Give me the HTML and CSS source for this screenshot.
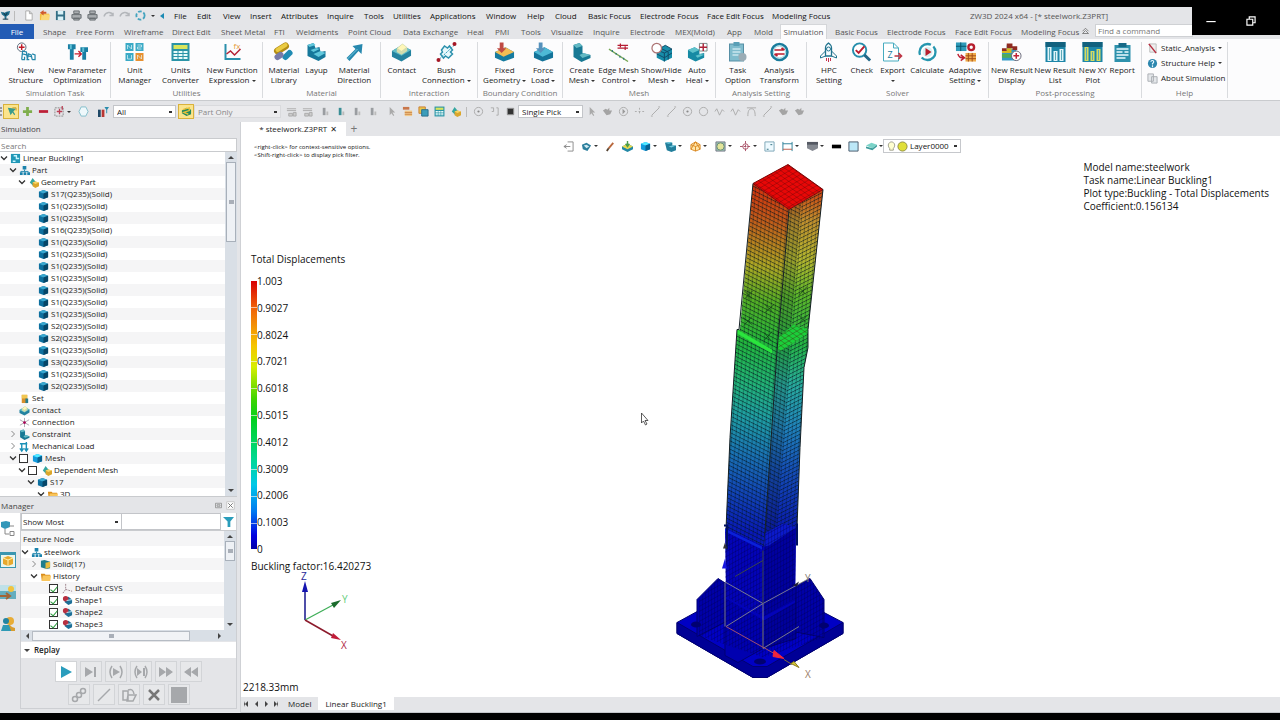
FILE: index.html
```html
<!DOCTYPE html>
<html lang="en">
<head>
<meta charset="utf-8">
<title>ZW3D 2024 x64 - [* steelwork.Z3PRT]</title>
<link rel="stylesheet" href="styles.css">
</head>
<body>
<svg class="sprite" aria-hidden="true">
<symbol id="cube" viewBox="0 0 12 12"><path d="M1 3 6 1l5 2v6l-5 2-5-2z" fill="#0d6f9e"/><path d="M1 3 6 1l5 2-5 2z" fill="#3aa7cf"/><path d="M6 5l5-2v6l-5 2z" fill="#064668"/></symbol>
<symbol id="tree" viewBox="0 0 12 12"><path d="M4 1h4v4H4zM1 8h3v3H1zM5 8h3v3H5zM9 8h3v3H9z" fill="#1b83ac"/><path d="M6 5v2M2 8V7h8v1" stroke="#1b83ac" fill="none"/></symbol>
<symbol id="geo" viewBox="0 0 12 12"><path d="M2 6 5 1l4 5-3 4z" fill="#35a6a0"/><path d="M5 6l3-1 4 1v4l-4 2-3-2z" fill="#dba62c"/><path d="M5 6l3-1 4 1-4 1.500z" fill="#f7d566"/></symbol>
<symbol id="folder" viewBox="0 0 12 12"><path d="M1 3h4l1 1h5v7H2z" fill="#d98c1a"/><path d="M3 5h9l-1 6H2z" fill="#f9c55b"/></symbol>
<symbol id="down" viewBox="0 0 8 8"><path d="M1 2.500 4 5.500 7 2.500" fill="none" stroke="#333" stroke-width="1.300"/></symbol>
<symbol id="right" viewBox="0 0 8 8"><path d="M2.500 1 5.500 4 2.500 7" fill="none" stroke="#888"/></symbol>
<symbol id="shape" viewBox="0 0 12 12"><path d="M3 4l4-2 4 3v4l-4 2-4-3z" fill="#1d6f96"/><circle cx="4" cy="4" r="3" fill="#b83040"/><path d="M5 6l6-1" stroke="#c9eefa"/></symbol>
<symbol id="struct" viewBox="0 0 22 20"><circle cx="7" cy="5" r="4.500" fill="#fff" stroke="#567"/><path d="M7 2v6M4 5h6" stroke="#c11a28" stroke-width="1.500"/><path d="M7 18l1-9 4 1 1 8M13 18l1-6 3 1 1 5M8 12l4 1M14 14l3 1M7 18h3v-3M12 18h3M18 18h3v-5l-3-1" fill="none" stroke="#2387ab" stroke-width="1.300"/></symbol>
<symbol id="param" viewBox="0 0 22 20"><path d="M1 2h8v5H7v11H3V7H1zM14 5h8v5h-2v8h-4v-8h-2z" fill="#197fa4"/><path d="M3 2h2v5H3zM16 5h2v5h-2z" fill="#60c0d5"/><path d="M8 12h6M12 9l3 3-3 3" fill="none" stroke="#c51c2d" stroke-width="1.400"/></symbol>
<symbol id="unitm" viewBox="0 0 20 20"><path d="M1 1h8v8H1zM11 1h8v8h-8zM1 11h8v8H1z" fill="#3baac6"/><path d="M11 11h8v8h-8z" fill="#e79131"/><path d="M3 7V3l4 4V3M13 3h4v2h-4v2h4M3 13v4h4v-4M13 17v-4l4 4v-4" fill="none" stroke="#dff4f8" stroke-opacity=".7"/></symbol>
<symbol id="unitc" viewBox="0 0 20 20"><rect x="1" y="1" width="18" height="18" fill="#2b94a7"/><path d="M3 3h14v4H3z" fill="#d9e55c"/><path d="M3 9h4v2H3zM8 9h4v2H8zM13 9h4v2h-4zM3 12h4v2H3zM8 12h4v2H8zM13 12h4v2h-4zM3 15h4v2H3zM8 15h4v2H8zM13 15h4v2h-4z" fill="#e9fbfa"/></symbol>
<symbol id="func" viewBox="0 0 20 20"><path d="M3 2v15h15" fill="none" stroke="#2a8fac" stroke-width="2"/><path d="M4 12l4-3 4 4 6-6" fill="none" stroke="#b52236" stroke-width="1.500"/><text x="11" y="7" font-size="8" fill="#e49b39">fx</text></symbol>
<symbol id="matlib" viewBox="0 0 20 20"><path d="M4 9l8-5" stroke="#b48d16" stroke-width="7" stroke-linecap="round"/><path d="M4 8l8-5" stroke="#eacb42" stroke-width="4" stroke-linecap="round"/><path d="M12 15l4-4" stroke="#1f8bb3" stroke-width="6" stroke-linecap="round"/><path d="M4 15l3-2" stroke="#777ba9" stroke-width="6" stroke-linecap="round"/></symbol>
<symbol id="layup" viewBox="0 0 20 20"><path d="M1 3l6-2 2 5 4-1 1 5 5-1v6l-7 4-11-5z" fill="#16789b"/><path d="M1 3l6-2 2 2-6 2zM4 8l6-2 3 1-6 3zM7 12l7-3 5 2-7 4z" fill="#60c7dc"/></symbol>
<symbol id="matdir" viewBox="0 0 20 20"><path d="M2 16L11 7 8 4l10-2-1 10-3-3-9 10z" fill="#2688ae"/><path d="M3 17l10-10" stroke="#70c5dc"/></symbol>
<symbol id="contact" viewBox="0 0 22 20"><path d="M1 9l10-6 10 5v6l-10 6-10-5z" fill="#23829f"/><path d="M1 9l10-6 10 5-10 6z" fill="#62bdc6"/><path d="M6 6l6-5 5 4v4l-6 4-5-3z" fill="#d2dcad"/><path d="M7 6l5-4 4 3-5 4z" fill="#fff7b8"/></symbol>
<symbol id="bush" viewBox="0 0 20 20"><path d="M5 8l3-4 3 2 2-2 3 4-2 2 2 2-4 4-3-2-2 2-3-4 2-2z" fill="#e7f8fb" stroke="#2d91ad" stroke-width="1.500"/><path d="M3 17L18 3" stroke="#2c9bba" stroke-dasharray="2 1"/><circle cx="2" cy="18" r="2" fill="#a51725"/><circle cx="18" cy="2" r="2" fill="#a51725"/></symbol>
<symbol id="fixed" viewBox="0 0 22 20"><path d="M1 10l11-5 9 5v6l-11 4-9-4z" fill="#157b9f"/><path d="M1 10l11-5 9 5-11 5z" fill="#f2bd53"/><path d="M6 0h4v6h3l-5 5-5-5h3z" fill="#bf4a43"/></symbol>
<symbol id="force" viewBox="0 0 22 20"><path d="M1 10l11-5 9 5v6l-11 4-9-4z" fill="#137399"/><path d="M1 10l11-5 9 5-11 5z" fill="#4db9d5"/><path d="M6 0h4v6h3l-5 5-5-5h3z" fill="#5591bc"/></symbol>
<symbol id="mesh" viewBox="0 0 20 20"><path d="M2 3l6-2 3 3v7l8 2v3l-9 4-8-5z" fill="#187994"/><path d="M2 3l6-2 3 3-6 2zM8 13l4-2 7 2-8 3z" fill="#63b9c4"/></symbol>
<symbol id="edge" viewBox="0 0 22 20"><path d="M1 7l20 13" stroke="#75a754" stroke-width="1.300"/><path d="M4 9h1M8 12h1M12 15h1M16 17h1" stroke="#17647a" stroke-width="2"/><path d="M10 3h11M10 6h11M13 1v4M18 4v4" stroke="#b51c33" stroke-width="1.300"/></symbol>
<symbol id="show" viewBox="0 0 22 20"><path d="M6 8l9-5 7 4v9l-8 4-8-4z" fill="#178da9"/><path d="M6 8l9-5 7 4-8 4zM14 11v9M10 6l8 4v8M6 12l8 4 8-5" fill="none" stroke="#114b67"/><circle cx="6" cy="6" r="5" fill="#fff" stroke="#ad7474" stroke-width="1.300"/></symbol>
<symbol id="heal" viewBox="0 0 22 20"><path d="M1 8l7-3 5 3v4l5-1v5l-9 4-8-4z" fill="#168aa4"/><path d="M1 8l7-3 5 3-7 3zM9 14l5-2 4 1-7 3z" fill="#5ec2cb"/><path d="M13 1h8v8h-8z" fill="#fff" stroke="#788"/><path d="M17 1v8M13 5h8" stroke="#ad2339" stroke-width="1.500"/></symbol>
<symbol id="task" viewBox="0 0 20 20"><rect x="2" y="2" width="14" height="17" fill="#80bccd" stroke="#568fa5"/><path d="M6 0h6v4H6z" fill="#5a9fb6"/><path d="M5 7h8M5 10h8M5 13h6" stroke="#eefbff"/><circle cx="15" cy="15" r="4" fill="#9aacb5"/></symbol>
<symbol id="transform" viewBox="0 0 20 20"><circle cx="10" cy="10" r="8" fill="#fff" stroke="#197c9c" stroke-width="2.500"/><circle cx="10" cy="10" r="6" fill="none" stroke="#94d5e2"/><path d="M5 8h9M12 6l3 2M15 12H6M8 14l-3-2" stroke="#bd1d2e" stroke-width="1.700"/></symbol>
<symbol id="hpc" viewBox="0 0 20 20"><path d="M7 14V6c0-3 3-5 3-5s3 2 3 5v8z" fill="#f5fcff" stroke="#21738e" stroke-width="1.300"/><circle cx="10" cy="7" r="2" fill="none" stroke="#21738e"/><path d="M7 9l-5 5v2l5-2M13 9l5 5v2l-5-2" fill="none" stroke="#21738e"/><path d="M8 16v3M10 16v4M12 16v3" stroke="#c5314c"/></symbol>
<symbol id="check" viewBox="0 0 22 20"><circle cx="9" cy="8" r="7" fill="#fff" stroke="#258eac" stroke-width="2"/><path d="M14 13l6 6" stroke="#236787" stroke-width="3"/><path d="M5 8l3 3 6-7" fill="none" stroke="#ba1c2f" stroke-width="2"/></symbol>
<symbol id="export" viewBox="0 0 20 20"><path d="M1 1h10l5 5v13H1zM11 1v5h5" fill="#fff" stroke="#47acc0"/><text x="5" y="16" font-size="9" fill="#197da1">Z</text><path d="M12 14h7M16 11l3 3-3 3" fill="none" stroke="#bd3444" stroke-width="1.600"/></symbol>
<symbol id="calc" viewBox="0 0 20 20"><circle cx="10" cy="10" r="8" fill="#fff" stroke="#2596af" stroke-width="2.300" stroke-dasharray="19 3"/><circle cx="10" cy="10" r="5" fill="#d9f0f2"/><path d="M8 6l6 4-6 4z" fill="#b8202d"/></symbol>
<symbol id="adapt" viewBox="0 0 22 20"><path d="M1 0h11v9H1z" fill="#2e9ab9"/><path d="M6 0v9M1 4h11" stroke="#07546b"/><circle cx="17" cy="5" r="3" fill="none" stroke="#b61e2d" stroke-width="2.500"/><path d="M11 11h11v9H11z" fill="#efaa48"/><path d="M14 11v9M18 11v9M11 14h11M11 17h11" stroke="#a34c18"/><path d="M3 12c1 4 3 4 6 4M6 13l4 3-4 3" fill="none" stroke="#bc1f31" stroke-width="1.500"/></symbol>
<symbol id="result" viewBox="0 0 22 20"><path d="M1 8h5V3h5v4h5v12H1z" fill="#3299c5"/><path d="M1 6h5v3H1zM6 1h6v5H6zM12 4h5v4h-5z" fill="#8f2a20"/><path d="M1 9h5V6h5v5H1z" fill="#d6b91f"/><path d="M1 12h10v4H1z" fill="#4fab58"/><circle cx="16" cy="14" r="5" fill="#fff" stroke="#667"/><path d="M16 11v6M13 14h6" stroke="#c02335" stroke-width="1.600"/></symbol>
<symbol id="bars" viewBox="0 0 20 20"><path d="M0 0h20v20H0z" fill="#1d86a8"/><path d="M0 0h20v5H0z" fill="#12617e"/><path d="M2 5h4v14H2zM8 9h4v10H8zM14 7h4v12h-4z" fill="currentColor"/><path d="M4 6v12M10 10v8M16 8v10" stroke="#5aa9b8"/></symbol>
<symbol id="report" viewBox="0 0 18 20"><path d="M1 3h16v17H1z" fill="#2d91ac"/><path d="M5 1h8v4H5z" fill="#176987"/><path d="M3 7h12M3 10h6M11 10h4M3 13h12M3 16h9" stroke="#eafaff" stroke-width="1.500"/></symbol>
<symbol id="page" viewBox="0 0 12 12"><path d="M3 1h4l3 3v7H3zM7 1v3h3" fill="#fff" stroke="#aaa"/></symbol>
<symbol id="save" viewBox="0 0 12 12"><path d="M1 1h10v10H1z" fill="#346f86"/><path d="M3 1h6v4H3zM3 7h6v4H3z" fill="#d9f2f8"/></symbol>
<symbol id="print" viewBox="0 0 12 12"><path d="M3 1h6v3H3zM1 5h10v4H1zM3 9h6v2H3z" fill="#a9adb0" stroke="#656a6d"/></symbol>
<symbol id="undo" viewBox="0 0 12 12"><path d="M1 6c2-5 8-4 10 1M1 3v3h4" fill="none" stroke="#b4b7bb" stroke-width="1.500"/></symbol>
<symbol id="hex" viewBox="0 0 12 12"><path d="M3.500 1h5L11 6 8.500 11h-5L1 6z" fill="#eef8fb" stroke="#7fbccb"/></symbol>
<symbol id="pair" viewBox="0 0 12 12"><path d="M1 3h10M1 5h10M3 8h4v3H3zM8 7h3v4H8z" fill="#ccc" stroke="#aaa"/></symbol>
<symbol id="tiny" viewBox="0 0 12 12"><path d="M3 2h3v8H3z" fill="currentColor"/><path d="M7 6h2v4H7z" fill="#bbb"/></symbol>
<symbol id="stack" viewBox="0 0 12 12"><path d="M1 1h7v3H1z" fill="#c9764a"/><path d="M3 5h8v6H3z" fill="#f2c98a"/><path d="M3 7h8M3 9h8" stroke="#c98347"/></symbol>
<symbol id="sheets" viewBox="0 0 12 12"><path d="M1 1h7v7H1z" fill="#e7c54a" stroke="#cb7c34"/><path d="M4 4h7v7H4z" fill="#3b9dba" stroke="#256b8b"/></symbol>
<symbol id="line" viewBox="0 0 12 12"><path d="M2 10l8-8M1 11h2M9 1h2" stroke="#aaa"/></symbol>
<symbol id="circle" viewBox="0 0 12 12"><circle cx="6" cy="6" r="4.500" fill="none" stroke="#aaa"/></symbol>
<symbol id="dotc" viewBox="0 0 12 12"><circle cx="6" cy="6" r="4.500" fill="none" stroke="#aaa"/><circle cx="6" cy="6" r="1.200" fill="#888"/></symbol>
<symbol id="wave" viewBox="0 0 12 12"><path d="M1 6l2-3 3 7 3-6 2 2" fill="none" stroke="#aaa"/></symbol>
<symbol id="arch" viewBox="0 0 12 12"><path d="M2 11c0-5 1-8 4-8s4 3 4 8M1 2h10" fill="none" stroke="#aaa"/></symbol>
<symbol id="pick" viewBox="0 0 12 12"><path d="M4 1v9l2-2 2 3 1-1-2-3h3z" fill="#aaa"/></symbol>
<symbol id="blob" viewBox="0 0 12 12"><path d="M1 5l3-2 2 1 2-2v3h3L9 9 5 10z" fill="#a4a4a4"/></symbol>
</svg>
<div class="strip"></div>

<header class="menubar">
  <div class="quick">
    <svg class="ic" viewBox="0 0 12 12"><path d="M1 2l4 1 2-1 4-1-1 4-3 2v3H5V7L2 5z" fill="#1f6d8c"/><path d="M4 3l2 3 2-3M3 10h6" fill="none" stroke="#12303f"/></svg><span class="bar"></span>
    <button title="New"><svg class="ic"><use href="#page"/></svg></button>
    <button title="Open"><svg class="ic" viewBox="0 0 12 12"><path d="M1 4h10v7H1z" fill="#f3bd3f"/><path d="M3 5h9l-1 6H2z" fill="#fbd876"/><path d="M5 0L1 3l4 3V4h3V2H5z" fill="#d05a2b"/></svg></button>
    <button title="Save"><svg class="ic"><use href="#save"/></svg></button>
    <button title="Print"><svg class="ic"><use href="#print"/></svg></button>
    <button title="Print 3D"><svg class="ic"><use href="#print"/></svg></button>
    <button title="Undo"><svg class="ic flip"><use href="#undo"/></svg></button>
    <button title="Redo"><svg class="ic flip"><use href="#undo"/></svg></button>
    <button title="Regenerate"><svg class="ic" viewBox="0 0 12 12"><circle cx="6" cy="6" r="4.500" fill="none" stroke="#45a4bf" stroke-width="2" stroke-dasharray="4 2"/></svg></button>
    <i class="caret"></i><i class="back"></i>
  </div>
  <nav class="menus"><a href="#">File</a><a href="#">Edit</a><a href="#">View</a><a href="#">Insert</a><a href="#">Attributes</a><a href="#">Inquire</a><a href="#">Tools</a><a href="#">Utilities</a><a href="#">Applications</a><a href="#">Window</a><a href="#">Help</a><a href="#">Cloud</a><a href="#">Basic Focus</a><a href="#">Electrode Focus</a><a href="#">Face Edit Focus</a><a href="#">Modeling Focus</a><span>ZW3D 2024 x64 - [* steelwork.Z3PRT]</span></nav>
</header>
<div class="winctl">
  <button title="Minimize"><svg viewBox="0 0 12 12"><path d="M2 6.500h8" stroke="#fff"/></svg></button>
  <button title="Restore"><svg viewBox="0 0 12 12"><path d="M2.500 4.500h5v5h-5zM4.500 4.500v-2h5v5h-2" fill="none" stroke="#fff"/></svg></button>
</div>

<nav class="tabs"><a class="file" href="#">File</a><a href="#">Shape</a><a href="#">Free Form</a><a href="#">Wireframe</a><a href="#">Direct Edit</a><a href="#">Sheet Metal</a><a href="#">FTI</a><a href="#">Weldments</a><a href="#">Point Cloud</a><a href="#">Data Exchange</a><a href="#">Heal</a><a href="#">PMI</a><a href="#">Tools</a><a href="#">Visualize</a><a href="#">Inquire</a><a href="#">Electrode</a><a href="#">MEX(Mold)</a><a href="#">App</a><a href="#">Mold</a><a class="on" href="#">Simulation</a><a href="#">Basic Focus</a><a href="#">Electrode Focus</a><a href="#">Face Edit Focus</a><a href="#">Modeling Focus</a><svg class="roll" viewBox="0 0 12 12"><path d="M2 7l4-4 4 4M2 10l4-4 4 4z" fill="none" stroke="#666"/></svg><input type="text" placeholder="Find a command" aria-label="Find a command"></nav>

<section class="ribbon">
  <div class="group g1"><div class="tools">
    <button><svg><use href="#struct"/></svg><span>New<br>Structure</span></button>
    <button><svg><use href="#param"/></svg><span>New Parameter<br>Optimization</span></button></div><h2>Simulation Task</h2></div>
  <div class="group g2"><div class="tools">
    <button><svg><use href="#unitm"/></svg><span>Unit<br>Manager</span></button>
    <button><svg><use href="#unitc"/></svg><span>Units<br>Converter</span></button>
    <button><svg><use href="#func"/></svg><span>New Function<br>Expression <i class="caret"></i></span></button></div><h2>Utilities</h2></div>
  <div class="group g3"><div class="tools">
    <button><svg><use href="#matlib"/></svg><span>Material<br>Library</span></button>
    <button><svg><use href="#layup"/></svg><span>Layup</span></button>
    <button><svg><use href="#matdir"/></svg><span>Material<br>Direction</span></button></div><h2>Material</h2></div>
  <div class="group g4"><div class="tools">
    <button><svg><use href="#contact"/></svg><span>Contact</span></button>
    <button><svg><use href="#bush"/></svg><span>Bush<br>Connection <i class="caret"></i></span></button></div><h2>Interaction</h2></div>
  <div class="group g5"><div class="tools">
    <button><svg><use href="#fixed"/></svg><span>Fixed<br>Geometry <i class="caret"></i></span></button>
    <button><svg><use href="#force"/></svg><span>Force<br>Load <i class="caret"></i></span></button></div><h2>Boundary Condition</h2></div>
  <div class="group g6"><div class="tools">
    <button><svg><use href="#mesh"/></svg><span>Create<br>Mesh <i class="caret"></i></span></button>
    <button><svg><use href="#edge"/></svg><span>Edge Mesh<br>Control <i class="caret"></i></span></button>
    <button><svg><use href="#show"/></svg><span>Show/Hide<br>Mesh <i class="caret"></i></span></button>
    <button><svg><use href="#heal"/></svg><span>Auto<br>Heal <i class="caret"></i></span></button></div><h2>Mesh</h2></div>
  <div class="group g7"><div class="tools">
    <button><svg><use href="#task"/></svg><span>Task<br>Option</span></button>
    <button><svg><use href="#transform"/></svg><span>Analysis<br>Transform</span></button></div><h2>Analysis Setting</h2></div>
  <div class="group g8"><div class="tools">
    <button><svg><use href="#hpc"/></svg><span>HPC<br>Setting</span></button>
    <button><svg><use href="#check"/></svg><span>Check</span></button>
    <button><svg><use href="#export"/></svg><span>Export<br><i class="caret"></i></span></button>
    <button><svg><use href="#calc"/></svg><span>Calculate</span></button>
    <button><svg><use href="#adapt"/></svg><span>Adaptive<br>Setting <i class="caret"></i></span></button></div><h2>Solver</h2></div>
  <div class="group g9"><div class="tools">
    <button><svg><use href="#result"/></svg><span>New Result<br>Display</span></button>
    <button><svg class="cool"><use href="#bars"/></svg><span>New Result<br>List</span></button>
    <button><svg class="warm"><use href="#bars"/></svg><span>New XY<br>Plot</span></button>
    <button><svg><use href="#report"/></svg><span>Report</span></button></div><h2>Post-processing</h2></div>
  <div class="group help"><div class="helplist">
    <button><svg class="ic" viewBox="0 0 12 12"><path d="M3 1h7v9H3z" fill="#eee" stroke="#bbb"/><path d="M2 1l8 10" stroke="#b52b3d" stroke-width="1.600"/></svg>Static_Analysis <i class="caret"></i></button>
    <button><svg class="ic" viewBox="0 0 12 12"><circle cx="6" cy="6" r="5" fill="#2d87ae"/><path d="M4 4c2-3 5 0 2 2v1M6 8v2" fill="none" stroke="#e7f8ff" stroke-width="1.300"/></svg>Structure Help <i class="caret"></i></button>
    <button><svg class="ic" viewBox="0 0 12 12"><path d="M1 1h6v8H1zM5 4h6v7H5z" fill="#e4e7ea" stroke="#a8adb1"/></svg>About Simulation</button></div><h2>Help</h2></div>
</section>

<div class="toolbar">
  <span class="grip"></span>
  <button class="lit" title="Pick"><svg class="ic" viewBox="0 0 12 12"><path d="M2 2l3 8 2-3 2 3 1-1-2-3 3-3z" fill="#3b9b8c"/><path d="M7 2h4v3" fill="none" stroke="#c79a2a"/></svg></button>
  <button title="Add"><svg class="ic" viewBox="0 0 12 12"><path d="M6 1v10M1 6h10" stroke="#7fae4c" stroke-width="3"/></svg></button>
  <button title="Remove"><svg class="ic" viewBox="0 0 12 12"><path d="M1 6h10" stroke="#bd2038" stroke-width="3"/></svg></button>
  <button title="Box"><svg class="ic" viewBox="0 0 12 12"><path d="M1 2h9v9H1z" fill="none" stroke="#888" stroke-dasharray="2 1"/><path d="M6 3v6M3 6h6M9 0v4" stroke="#bb4055" stroke-width="1.400"/></svg></button>
  <i class="caret"></i>
  <button class="spaced" title="Polygon"><svg class="ic"><use href="#hex"/></svg></button>
  <button title="Filter"><svg class="ic" viewBox="0 0 12 12"><path d="M0 4h3v8H0z" fill="#1f4866"/><path d="M4 4h3v8H4z" fill="#b93632"/><path d="M7 1h5L10 4v4H9V4z" fill="#2b8cac"/></svg></button>
  <select class="s1" aria-label="Filter"><option>All</option></select>
  <button class="lit" title="Scope"><svg class="ic" viewBox="0 0 12 12"><path d="M1 5l5-3 5 2v5l-5 2-5-3z" fill="#23885f"/><path d="M2 4l7-2v3l-6 2 5 2" fill="none" stroke="#e8c139" stroke-width="1.500"/></svg></button>
  <select class="s2" disabled aria-label="Scope"><option>Part Only</option></select>
  <button title="Align"><svg class="ic"><use href="#pair"/></svg></button>
  <button title="Group"><svg class="ic"><use href="#pair"/></svg></button>
  <button class="gap" title="Tag 1"><svg class="ic dim"><use href="#tiny"/></svg></button>
  <button title="Tag 2"><svg class="ic teal"><use href="#tiny"/></svg></button>
  <button title="Tag 3"><svg class="ic dim"><use href="#tiny"/></svg></button>
  <button title="Tag 4"><svg class="ic dim"><use href="#tiny"/></svg></button>
  <button class="gap" title="Cursor"><svg class="ic"><use href="#pick"/></svg></button>
  <button title="List"><svg class="ic"><use href="#stack"/></svg></button>
  <button title="Copy"><svg class="ic"><use href="#sheets"/></svg></button>
  <button title="Calculate"><svg class="ic"><use href="#unitc"/></svg></button>
  <button title="Browse"><svg class="ic"><use href="#geo"/></svg></button>
  <span class="bar"></span>
  <button title="Target"><svg class="ic"><use href="#dotc"/></svg></button>
  <button title="Path"><svg class="ic" viewBox="0 0 12 12"><path d="M2 2h3v4H3M8 2h2v8H8" fill="none" stroke="#aaa"/></svg></button>
  <button title="Stop"><svg class="ic" viewBox="0 0 12 12"><path d="M2.500 2.500h7v7h-7z" fill="#333" stroke="#999"/></svg></button>
  <select class="s3" aria-label="Pick mode"><option>Single Pick</option></select>
  <button title="Pick"><svg class="ic"><use href="#pick"/></svg></button>
  <button title="Edges"><svg class="ic"><use href="#blob"/></svg></button>
  <button title="Centre"><svg class="ic" viewBox="0 0 12 12"><circle cx="6" cy="6" r="4.500" fill="none" stroke="#aaa"/><path d="M5 3l3 3-3 3z" fill="#999"/></svg></button>
  <button title="Points"><svg class="ic" viewBox="0 0 12 12"><path d="M1 6h10M6 2v8" stroke="#aaa" stroke-dasharray="2 2"/></svg></button>
  <button title="Line"><svg class="ic"><use href="#line"/></svg></button>
  <button title="Segment"><svg class="ic"><use href="#line"/></svg></button>
  <button title="Circle"><svg class="ic"><use href="#dotc"/></svg></button>
  <button title="Arc"><svg class="ic"><use href="#circle"/></svg></button>
  <button title="Spline"><svg class="ic"><use href="#wave"/></svg></button>
  <button title="Curve"><svg class="ic"><use href="#wave"/></svg></button>
  <button title="Tangent"><svg class="ic"><use href="#arch"/></svg></button>
  <button title="Ray"><svg class="ic"><use href="#line"/></svg></button>
  <button title="Face"><svg class="ic"><use href="#blob"/></svg></button>
  <button title="Body"><svg class="ic"><use href="#blob"/></svg></button>
</div>

<main>
<aside>
  <h2 class="ptitle">Simulation</h2>
  <input class="search" type="text" placeholder="Search" aria-label="Search">
  <div class="pane simpane">
    <ul class="rows">
      <li><svg class="tw"><use href="#down"/></svg><svg class="ic" viewBox="0 0 12 12"><path d="M1 1h10v10H1z" fill="#2097b6"/><path d="M4 3h3v3h3M3 9h3" fill="none" stroke="#c8f5ff" stroke-width="1.500"/></svg>Linear Buckling1</li>
      <li class="l1"><svg class="tw"><use href="#down"/></svg><svg class="ic"><use href="#tree"/></svg>Part</li>
      <li class="l2"><svg class="tw"><use href="#down"/></svg><svg class="ic"><use href="#geo"/></svg>Geometry Part</li>
      <li class="leaf"><svg class="ic"><use href="#cube"/></svg>S17(Q235)(Solid)</li>
      <li class="leaf"><svg class="ic"><use href="#cube"/></svg>S1(Q235)(Solid)</li>
      <li class="leaf"><svg class="ic"><use href="#cube"/></svg>S1(Q235)(Solid)</li>
      <li class="leaf"><svg class="ic"><use href="#cube"/></svg>S16(Q235)(Solid)</li>
      <li class="leaf"><svg class="ic"><use href="#cube"/></svg>S1(Q235)(Solid)</li>
      <li class="leaf"><svg class="ic"><use href="#cube"/></svg>S1(Q235)(Solid)</li>
      <li class="leaf"><svg class="ic"><use href="#cube"/></svg>S1(Q235)(Solid)</li>
      <li class="leaf"><svg class="ic"><use href="#cube"/></svg>S1(Q235)(Solid)</li>
      <li class="leaf"><svg class="ic"><use href="#cube"/></svg>S1(Q235)(Solid)</li>
      <li class="leaf"><svg class="ic"><use href="#cube"/></svg>S1(Q235)(Solid)</li>
      <li class="leaf"><svg class="ic"><use href="#cube"/></svg>S1(Q235)(Solid)</li>
      <li class="leaf"><svg class="ic"><use href="#cube"/></svg>S2(Q235)(Solid)</li>
      <li class="leaf"><svg class="ic"><use href="#cube"/></svg>S2(Q235)(Solid)</li>
      <li class="leaf"><svg class="ic"><use href="#cube"/></svg>S1(Q235)(Solid)</li>
      <li class="leaf"><svg class="ic"><use href="#cube"/></svg>S3(Q235)(Solid)</li>
      <li class="leaf"><svg class="ic"><use href="#cube"/></svg>S1(Q235)(Solid)</li>
      <li class="leaf"><svg class="ic"><use href="#cube"/></svg>S2(Q235)(Solid)</li>
      <li class="item"><svg class="ic" viewBox="0 0 12 12"><path d="M3 2h6v9H3z" fill="#d8902c"/><path d="M3 2h6v4H3z" fill="#f0c751"/><path d="M7 6h3v5H7z" fill="#287c8b"/></svg>Set</li>
      <li class="item"><svg class="ic"><use href="#contact"/></svg>Contact</li>
      <li class="item"><svg class="ic" viewBox="0 0 12 12"><path d="M6 1v10M1 3l10 6M1 9l10-6" stroke="#a9a4ad"/><circle cx="6" cy="6" r="1.500" fill="#a05"/></svg>Connection</li>
      <li class="l1"><svg class="tw"><use href="#right"/></svg><svg class="ic"><use href="#mesh"/></svg>Constraint</li>
      <li class="l1"><svg class="tw"><use href="#right"/></svg><svg class="ic" viewBox="0 0 12 12"><path d="M3 3v7M1 8l2 3 2-3M8 1v9M6 8l2 3 2-3M1 3h8" fill="none" stroke="#1b91b7" stroke-width="1.500"/></svg>Mechanical Load</li>
      <li class="l1"><svg class="tw"><use href="#down"/></svg><label><input type="checkbox"><svg class="ic bright"><use href="#cube"/></svg>Mesh</label></li>
      <li class="l2"><svg class="tw"><use href="#down"/></svg><label><input type="checkbox"><svg class="ic"><use href="#geo"/></svg>Dependent Mesh</label></li>
      <li class="l3"><svg class="tw"><use href="#down"/></svg><svg class="ic"><use href="#cube"/></svg>S17</li>
      <li class="l4"><svg class="tw"><use href="#down"/></svg><svg class="ic"><use href="#folder"/></svg>3D</li>
    </ul>
    <div class="vscroll"><i class="up"></i><b class="long"></b><i class="dn"></i></div>
  </div>
  <h2 class="ptitle mgr">Manager <svg class="ic" viewBox="0 0 12 12"><path d="M2 3h8v6H2zM4 5h4v2H4z" fill="none" stroke="#888"/></svg><svg class="ic" viewBox="0 0 12 12"><path d="M1 1h10v10H1z" fill="#fff" stroke="#bbb"/><path d="M3 3l6 6M9 3l-6 6" stroke="#777" stroke-width="1.300"/></svg></h2>
  <div class="manager">
    <div class="side">
      <button class="cur" title="History"><svg viewBox="0 0 16 16"><path d="M1 2l5-1 4 1v5l-5 2-4-2z" fill="#3297b9"/><path d="M5 9v5h4M9 6h5" fill="none" stroke="#888"/><path d="M10 11.500h4v4h-4z" fill="#fff" stroke="#888"/></svg></button>
      <button title="View"><svg viewBox="0 0 16 16"><path d="M0 0h16v16H0z" fill="#3996b0"/><path d="M1 3h14v12H1z" fill="#e9f5ee"/><path d="M3 6l5-2 5 2v6l-5 2-5-2z" fill="#e7a92e"/><path d="M3 6l5 2 5-2M8 8v6" fill="none" stroke="#fff0a8"/></svg></button>
      <button title="Visual"><svg viewBox="0 0 16 16"><path d="M0 1h16v14H0z" fill="#64aebf"/><path d="M0 1h16v6H0z" fill="#bfe1e9"/><circle cx="11" cy="5" r="3" fill="#f1c33e"/><path d="M0 12h9M6 9l4 3-4 3" fill="none" stroke="#a26537" stroke-width="2"/></svg></button>
      <button title="Roles"><svg viewBox="0 0 16 16"><circle cx="10" cy="5" r="4" fill="#e8ac36"/><path d="M9 8l3 3 3 1v3H8z" fill="#d99c2e"/><circle cx="6" cy="5" r="3" fill="#2384a2"/><path d="M1 15l2-6h6l2 6z" fill="#2f9ab5"/></svg></button>
    </div>
    <div class="hist">
      <div class="filter"><select aria-label="Show"><option>Show Most</option></select><input type="text" aria-label="Filter features"><button title="Filter"><svg class="ic" viewBox="0 0 12 12"><path d="M0 1h12L8 6v6H5V6z" fill="#2a9dbb"/></svg></button></div>
      <div class="pane histpane">
        <ul class="rows">
          <li class="head">Feature Node</li>
          <li><svg class="tw"><use href="#down"/></svg><svg class="ic"><use href="#tree"/></svg>steelwork</li>
          <li class="l1"><svg class="tw"><use href="#right"/></svg><svg class="ic" viewBox="0 0 12 12"><path d="M1 2l4-1 6 2v7l-4 1-6-2z" fill="#1d7d8c"/><path d="M6 4l5-1v6l-5 2z" fill="#e6bb3e"/></svg>Solid(17)</li>
          <li class="l1"><svg class="tw"><use href="#down"/></svg><svg class="ic"><use href="#folder"/></svg>History</li>
          <li class="chk"><label><input type="checkbox" checked><svg class="ic" viewBox="0 0 12 12"><path d="M4 1v6l7 2M4 7l-3 4" fill="none" stroke="#9a7f88" stroke-dasharray="2 1"/></svg>Default CSYS</label></li>
          <li class="chk"><label><input type="checkbox" checked><svg class="ic"><use href="#shape"/></svg>Shape1</label></li>
          <li class="chk"><label><input type="checkbox" checked><svg class="ic"><use href="#shape"/></svg>Shape2</label></li>
          <li class="chk"><label><input type="checkbox" checked><svg class="ic"><use href="#shape"/></svg>Shape3</label></li>
        </ul>
        <div class="vscroll"><i class="up"></i><b class="short"></b><i class="dn"></i></div>
      </div>
      <div class="hscroll"><i class="lf"></i><b></b><i class="rt"></i></div>
      <h3><i class="dn"></i>Replay</h3>
      <div class="replay">
        <div><button class="play" title="Play"><svg viewBox="0 0 16 16"><path d="M3 2l11 6-11 6z" fill="#2a9dbd"/></svg></button>
        <button title="Step"><svg viewBox="0 0 16 16"><path d="M2 3l8 5-8 5zM11 3h2v10h-2z"/></svg></button>
        <button title="To point"><svg viewBox="0 0 16 16"><path d="M5 4l7 4-7 4z"/><path d="M4 2q-4 6 0 12M12 2q4 6 0 12" class="o"/></svg></button>
        <button title="Skip"><svg viewBox="0 0 16 16"><path d="M4 4l5 4-5 4zM10 4h2v8h-2z"/><path d="M4 2q-4 6 0 12M12 2q4 6 0 12" class="o"/></svg></button>
        <button title="Forward"><svg viewBox="0 0 16 16"><path d="M1 3l7 5-7 5zM8 3l7 5-7 5z"/></svg></button>
        <button title="Rewind"><svg viewBox="0 0 16 16"><path d="M15 3L8 8l7 5zM8 3L1 8l7 5z"/></svg></button></div>
        <div><button title="Link"><svg viewBox="0 0 16 16"><circle cx="4" cy="12" r="2.500" class="o"/><circle cx="8" cy="8" r="2.500" class="o"/><circle cx="12" cy="4" r="2.500" class="o"/></svg></button>
        <button title="Edit"><svg viewBox="0 0 16 16"><path d="M2 14L14 2" class="o"/></svg></button>
        <button title="Redefine"><svg viewBox="0 0 16 16"><path d="M2 4h5v9H2zM7 8h8l-3 6H6z" class="o"/><path d="M7 3q5-2 6 4" class="o"/></svg></button>
        <button title="Delete"><svg viewBox="0 0 16 16"><path d="M3 3l10 10M13 3L3 13" stroke="#777" stroke-width="2.500"/></svg></button>
        <button title="Stop"><svg viewBox="0 0 16 16"><path d="M0 0h16v16H0z"/></svg></button></div>
      </div>
    </div>
  </div>
</aside>

<section class="doc">
  <div class="doctabs"><a href="#">* steelwork.Z3PRT <b>✕</b></a><button title="New tab">+</button></div>
  <div class="view">
    <div class="info">
      <p class="hint">&lt;right-click&gt; for context-sensitive options.<br>&lt;Shift-right-click&gt; to display pick filter.</p>
      <p class="ltitle">Total Displacements</p>
      <div class="legend"><div class="ramp"></div><ol><li>1.003</li><li>0.9027</li><li>0.8024</li><li>0.7021</li><li>0.6018</li><li>0.5015</li><li>0.4012</li><li>0.3009</li><li>0.2006</li><li>0.1003</li><li>0</li></ol></div>
      <p class="factor">Buckling factor:16.420273</p>
      <svg class="triad" viewBox="292 571 72 84"><path d="M305 621V590" stroke="#14148c" stroke-width="1.500"/><path d="M302 593l3-11 3 11z" fill="#1414b0"/><path d="M305 621l28-15" stroke="#3fae58" stroke-width="1.300"/><path d="M331 604l10-3-7 8z" fill="#1b6b2c"/><path d="M305 621l28 16" stroke="#8c1a2c" stroke-width="1.500"/><path d="M333 634l8 7-10-2z" fill="#c01c38"/><text x="301" y="581" fill="#2a2a9a">Z</text><text x="342" y="604" fill="#5fce7c">Y</text><text x="341" y="650" fill="#b02742">X</text></svg>
      <p class="scale">2218.33mm</p>
    </div>
    <div class="stage">
      <div class="viewbar">
        <button title="Exit"><svg class="ic" viewBox="0 0 12 12"><path d="M5 1h6v10H5M1 6h7M4 4L1 6l3 2" fill="none" stroke="#888"/></svg></button>
        <button class="w" title="View"><svg class="ic" viewBox="0 0 12 12"><path d="M1 4l5-2 5 3-4 6-5-2z" fill="#2c7f9d"/><path d="M3 5l3-1 3 2-3 2z" fill="#cfeaf2"/></svg><i class="caret"></i></button>
        <button title="Paint"><svg class="ic" viewBox="0 0 12 12"><path d="M4 8l5-6" stroke="#b9683d" stroke-width="2"/><path d="M2 11l2-3" stroke="#543" stroke-width="2"/></svg></button>
        <button title="Isolate"><svg class="ic" viewBox="0 0 12 12"><path d="M0 6l6-3 6 3v3l-6 3-6-3z" fill="#2388a6"/><path d="M0 6l6-3 6 3-6 3z" fill="#e8d94e"/><path d="M6 0v5M4 3l2 3 2-3" fill="none" stroke="#4c9b4b" stroke-width="1.500"/></svg></button>
        <button class="w" title="Shade"><svg class="ic bright"><use href="#cube"/></svg><i class="caret"></i></button>
        <button class="w" title="Section"><svg class="ic" viewBox="0 0 12 12"><path d="M0 2l5-1 3 1v3h4v5l-5 2-5-2z" fill="#237f9c"/><path d="M0 2l5-1 3 1-4 1zM4 6l4-1h4l-5 2z" fill="#6ec9dd"/></svg><i class="caret"></i></button>
        <button class="w" title="Wireframe"><svg class="ic" viewBox="0 0 12 12"><path d="M1 4l5-3 5 3v5l-5 2-5-2zM1 4l5 2 5-2M6 6v5M1 9l5-8 5 8" fill="#ffe6a8" stroke="#d9861d"/></svg><i class="caret"></i></button>
        <button class="w" title="Zoom"><svg class="ic" viewBox="0 0 12 12"><path d="M1 1h10v10H1z" fill="#9bc6b4" stroke="#778"/><circle cx="6" cy="6" r="4" fill="#e2e59a" stroke="#687"/></svg><i class="caret"></i></button>
        <button class="w" title="Centre"><svg class="ic" viewBox="0 0 12 12"><path d="M6 0v12M0 6h12" stroke="#a54b63" stroke-dasharray="3 1"/><circle cx="6" cy="6" r="3" fill="none" stroke="#a54b63"/></svg><i class="caret"></i></button>
        <button title="Grid"><svg class="ic" viewBox="0 0 12 12"><path d="M1 1h10v10H1z" fill="#eefaff" stroke="#7aa3b5"/><path d="M3 9h2M7 4h2" stroke="#267"/></svg></button>
        <button class="w" title="Dimension"><svg class="ic" viewBox="0 0 12 12"><path d="M1 1v10M11 1v10M1 3h10" stroke="#267d96" fill="none"/><path d="M1 9h10" stroke="#b54"/></svg><i class="caret"></i></button>
        <button class="w" title="Background"><svg class="ic" viewBox="0 0 12 12"><path d="M0 1h12v7l-6 3-6-3z" fill="#858991"/><path d="M0 1h12v3H0z" fill="#555963"/></svg><i class="caret"></i></button>
        <button title="Line colour"><svg class="ic" viewBox="0 0 12 12"><path d="M1 4h10v4H1z"/></svg></button>
        <button title="Fill colour"><svg class="ic" viewBox="0 0 12 12"><path d="M1 1h10v10H1z" fill="#bce8f8" stroke="#456"/></svg></button>
        <button class="w" title="Layers"><svg class="ic" viewBox="0 0 12 12"><path d="M0 5l6-3 6 2-5 4z" fill="#7bd3c8"/><path d="M0 6l7 2 5-4v2l-5 4-7-2z" fill="#3d9c9b"/></svg><i class="caret"></i></button>
        <div class="layer"><svg class="ic" viewBox="0 0 12 12"><path d="M4 8C1 5 3 1 6 1s5 4 2 7v2H4z" fill="#ffffd0" stroke="#998"/></svg><svg class="ic" viewBox="0 0 12 12"><circle cx="6" cy="6" r="5" fill="#e0df39" stroke="#8c8b43"/></svg><select aria-label="Layer"><option>Layer0000</option></select></div>
      </div>
      <svg class="model" viewBox="560 156 401 538" role="img" aria-label="Buckling result on steel column">
        <defs>
          <linearGradient id="lf" gradientUnits="userSpaceOnUse" x1="760" y1="180" x2="722" y2="530"><stop offset="0" stop-color="#d62a0a"/><stop offset=".12" stop-color="#c2601a"/><stop offset=".24" stop-color="#b0a824"/><stop offset=".34" stop-color="#55b024"/><stop offset=".46" stop-color="#22b83c"/><stop offset=".58" stop-color="#22b47a"/><stop offset=".67" stop-color="#1fa0a4"/><stop offset=".77" stop-color="#1a76b4"/><stop offset=".88" stop-color="#1248b8"/><stop offset="1" stop-color="#0818b8"/></linearGradient>
          <linearGradient id="rf" gradientUnits="userSpaceOnUse" x1="800" y1="185" x2="784" y2="530"><stop offset="0" stop-color="#cf3a0c"/><stop offset=".1" stop-color="#c2902e"/><stop offset=".22" stop-color="#b2b82e"/><stop offset=".32" stop-color="#5cb82a"/><stop offset=".46" stop-color="#26b846"/><stop offset=".58" stop-color="#28aca0"/><stop offset=".7" stop-color="#2084bc"/><stop offset=".82" stop-color="#1550b8"/><stop offset="1" stop-color="#0818b0"/></linearGradient>
          <pattern id="ml" width="4" height="4" patternUnits="userSpaceOnUse" patternTransform="matrix(1 .5 -.08 1 0 0)"><path d="M0 .5H4" stroke="#03131c" stroke-opacity=".8" stroke-width=".7"/><path d="M1 0V4" stroke="#03131c" stroke-opacity=".5" stroke-width=".7"/></pattern>
          <pattern id="mr" width="4" height="4" patternUnits="userSpaceOnUse" patternTransform="matrix(1 -.5 -.08 1 0 0)"><path d="M0 .5H4" stroke="#03131c" stroke-opacity=".8" stroke-width=".7"/><path d="M1 0V4" stroke="#03131c" stroke-opacity=".5" stroke-width=".7"/></pattern>
          <pattern id="mt" width="5" height="5" patternUnits="userSpaceOnUse" patternTransform="matrix(.8 .56 .8 -.47 0 0)"><path d="M0 .5H5M.5 0V5" stroke="#4a0505" stroke-opacity=".45" stroke-width=".7"/></pattern>
          <pattern id="mb" width="3" height="5" patternUnits="userSpaceOnUse" patternTransform="matrix(1 -.55 0 1 0 0)"><path d="M.5 0V5M0 .5H3" stroke="#00004d" stroke-opacity=".45" stroke-width=".7"/></pattern>
        </defs>
        <g stroke="#000072">
          <path d="M677 622l22-12 64-34 61 36 19 10v11l-76 44h-14l-76-44z" fill="#0000c4"/>
          <path d="M677 622v11l76 44h14l76-44v-11l-76 44h-14z" fill="#000096"/>
          <path d="M697 636v-37l21-21 8 5v38zM824 637v-38l-14-21-15 8-2 45z" fill="#0000a8"/>
          <path d="M725 583l38 19v46l-25 14-13-7z" fill="#0000b0"/><path d="M763 602l33-18v54l-33 10z" fill="#00009c"/>
        </g>
        <path d="M699 612v-13l19-21 8 5 38 20 46-25 14 21v38l-61 20-64-22z" fill="url(#mb)"/>
        <g fill="#000070"><ellipse cx="696" cy="624" rx="5" ry="3"/><ellipse cx="824" cy="625" rx="5" ry="3"/><ellipse cx="760" cy="661" rx="6" ry="3"/></g>
        <path d="M725 528l1 70 38 22 31-18 1-76z" fill="#0303b8"/><path d="M764 546v70l31-16 1-72z" fill="#0000a0"/><path d="M725 530v66l38 20 32-18v-70z" fill="url(#mb)"/>
        <path d="M753 183l36 26-12 141-13 196-38-18 4-90 7-108 3-1z" fill="url(#lf)"/>
        <path d="M789 209l34-20-15 140v18l-4 20-4 80-3 80-33 18 13-195z" fill="url(#rf)"/>
        <path d="M753 183l36 26-12 141-13 196-38-18 4-90 7-108 3-1z" fill="url(#ml)"/>
        <path d="M789 209l12-7-11 140-15 200-11 4 13-195z" fill="url(#ml)"/>
        <path d="M801 202l22-13-15 140v18l-4 20-4 80-3 80-22 15 15-200z" fill="url(#mr)"/>
        <path d="M789 209l12-7-11 140-15 200-11 4 13-195z" fill="#102018" fill-opacity=".16"/>
        <path d="M753 183l35-19 35 25-34 20z" fill="#e80707" stroke="#7b0505"/><path d="M753 183l35-19 35 25-34 20z" fill="url(#mt)"/>
        <path d="M778 337l16-13 14 5v4l-27 17-4-1z" fill="#1bcf3a"/><path d="M778 337l16-13 14 5v4l-27 17-4-1z" fill="url(#mt)"/>
        <path d="M737 329l35 20v4l-35-20z" fill="#2ae63d"/>
        <path d="M789 209l-12 141-13 196M753 183l-14 146h-2l-7 108-4 92M823 189l-15 140v18l-4 20-4 80-3 80" fill="none" stroke="#142024"/>
        <g fill="none" stroke="#0b3914" stroke-width=".7"><path d="M744 290l8 8M745 298l8-8M749 289v11M765 304l8 8M765 312l9-8M743 317l9 7M744 325l8-9M764 332l7 8M764 340l8-9M799 287l7 7M799 295l8-9M799 315l7 7M799 323l8-8"/></g>
        <path d="M765 533l18-10 13 4-27 18-5 1z" fill="#0b1acb"/><path d="M765 533l18-10 13 4-27 18-5 1z" fill="url(#mb)"/>
        <path d="M725 528l37 18v3l-37-18z" fill="#0a20d8"/><path d="M724 525h3v24M797 523v22" stroke="#001060" fill="none" stroke-width="2"/>
        <g fill="none" stroke="#86868e"><path d="M726 582l37 21 46-25M726 626l37-23v45l36-22M725 626v-44" stroke-width=".9"/><path d="M763 603V550M735 576l28-16" stroke="#3a4550"/><path d="M726 626l50 28" stroke="#a14e70"/></g>
        <path d="M774 650l10 8-11-2z" fill="#ef263d" stroke="#ef263d"/><path d="M784 659l8 5" stroke="#7d6b3a"/><path d="M791 663l8 4-5-6z" fill="#d4c93a" stroke="#8d7b1d"/><path d="M793 585l6-4-2 5z" fill="#223"/><path d="M725 558l-3 10h5z" fill="#1616e0"/><path d="M725 542l-2 6h4z" fill="#343434"/>
        <text x="805" y="581" fill="#8a8178">Y</text><text x="805" y="677" fill="#9b7e66">X</text>
        <path d="M641.500 412.500v10l2-2 2 4 1.500-1-2-3.500h3z" fill="#fff" stroke="#333" stroke-width=".8"/>
      </svg>
    </div>
    <p class="meta">Model name:steelwork<br>Task name:Linear Buckling1<br>Plot type:Buckling - Total Displacements<br>Coefficient:0.156134</p>
  </div>
  <nav class="sheets"><button title="First"><i class="lf first"></i></button><button title="Previous"><i class="lf"></i></button><button title="Next"><i class="rt"></i></button><button title="Last"><i class="rt last"></i></button><a href="#">Model</a><a class="on" href="#">Linear Buckling1</a></nav>
</section>
</main>
<div class="strip foot"></div>
</body>
</html>
```
FILE: styles.css
```css
* { box-sizing: border-box; }
body { margin: 0; min-height: 100vh; display: flex; flex-direction: column; position: relative; background: #e4e5e8; color: #222; font: 8px/10px "Open Sans", "Noto Sans", sans-serif; overflow-x: hidden; }
button, input, select { font: inherit; color: inherit; margin: 0; }
button { border: 0; padding: 0; background: none; }
select { appearance: none; border: 1px solid #c3c5c9; border-radius: 0; padding: 0 3px; background: #fff linear-gradient(#333, #333) no-repeat right 3px center / 3px 2px; }
a { color: inherit; text-decoration: none; }
h2, h3, p, ul, ol { margin: 0; padding: 0; font-size: 8px; font-weight: 400; list-style: none; }
.sprite { position: absolute; width: 0; height: 0; }
.ic { width: 11px; height: 11px; flex: none; }
.flip { transform: scaleX(-1); }
.bright { filter: brightness(1.4); }
.dim { color: #9a9da1; }
.teal { color: #3a8e96; }
.caret { display: inline-block; border: 2px solid transparent; border-top: 2px solid #333; border-bottom: 0; vertical-align: middle; flex: none; }
.up, .dn, .lf, .rt { width: 0; height: 0; border: 3px solid transparent; flex: none; }
.up { border-bottom-color: #444; border-top: 0; }
.dn { border-top-color: #444; border-bottom: 0; }
.lf { border-right-color: #444; border-left: 0; }
.rt { border-left-color: #444; border-right: 0; }
.bar { width: 1px; height: 10px; background: #bbb; }
.strip { height: 7px; background: #000; flex: none; }

.menubar { display: flex; height: 17px; align-items: center; color: #111; }
.quick { width: 174px; display: flex; align-items: center; gap: 5px; flex: none; }
.quick .bar { margin: 0 3px 0 -2px; }
.quick button { display: flex; }
.back { border: 3px solid transparent; border-right: 4px solid #1c8bb4; border-left: 0; }
.menus { flex: 1; display: grid; grid-template-columns: 23fr 26fr 27fr 31fr 46fr 37fr 29fr 37fr 56fr 41fr 28fr 33fr 52fr 67fr 65fr 198fr 310fr; white-space: nowrap; }
.menus > * { min-width: 0; }
.menus span { color: #555; }
.winctl { position: absolute; top: 7px; right: 0; width: 88px; height: 28px; padding: 0 22px 0 12px; background: #000; display: flex; justify-content: space-between; align-items: center; }
.winctl svg { width: 14px; height: 14px; display: block; }

.tabs { display: grid; height: 15px; grid-template-columns: 37fr 33fr 48fr 48fr 49fr 53fr 22fr 52fr 55fr 64fr 28fr 26fr 30fr 42fr 37fr 45fr 52fr 27fr 31fr 50fr 52fr 68fr 66fr 63fr 17fr 98fr 87fr; color: #555; white-space: nowrap; line-height: 15px; }
.tabs > * { min-width: 0; padding-left: 6px; }
.tabs .file { background: #235cb5; color: #fff; margin-right: 3px; padding: 0; text-align: center; }
.tabs .on { background: #fcfcfd; padding: 0; text-align: center; margin: 0 2px 0 1px; border: 1px solid #d4d6d9; border-bottom: 0; line-height: 14px; }
.tabs .roll { padding: 0; width: 9px; height: 9px; margin: 2px 0 0 3px; }
.tabs input { border: 1px solid #cfd1d4; background: #fff; padding: 0 2px; height: 13px; }
::placeholder { color: #777; opacity: 1; }

.ribbon { display: grid; grid-template-columns: 111fr 152fr 118fr 97fr 85fr 153fr 91fr 182fr 153fr 86fr 52fr; height: 62px; background: #fcfcfd; border-bottom: 1px solid #c9cbce; padding: 3px 0 2px; }
.group { border-right: 1px solid #d9dbde; display: flex; flex-direction: column; justify-content: space-between; min-width: 0; }
.group h2 { color: #777; text-align: center; }
.tools { display: grid; }
.tools button { display: flex; flex-direction: column; align-items: center; min-width: 0; white-space: nowrap; text-align: center; }
.tools svg { width: 21px; height: 20px; margin-bottom: 3px; flex: none; }
.cool { color: #dff4fa; }
.warm { color: #d4db60; }
.g1 .tools { grid-template-columns: 52fr 52fr 7fr; }
.g2 .tools { grid-template-columns: 48fr 44fr 60fr; }
.g3 .tools { grid-template-columns: 42fr 24fr 52fr; }
.g4 .tools { grid-template-columns: 42fr 48fr 7fr; }
.g5 .tools { grid-template-columns: 54fr 24fr 7fr; }
.g6 .tools { grid-template-columns: 38fr 36fr 50fr 22fr 7fr; }
.g7 .tools { grid-template-columns: 44fr 40fr 7fr; }
.g8 .tools { grid-template-columns: 44fr 22fr 40fr 30fr 46fr; }
.g9 .tools { grid-template-columns: 46fr 41fr 35fr 24fr 7fr; }
.helplist { display: flex; flex-direction: column; gap: 5px; padding: 1px 0 0 5px; white-space: nowrap; }
.helplist button { display: flex; gap: 3px; align-items: center; height: 10px; }

.toolbar { display: flex; align-items: center; height: 21px; }
.toolbar button { width: 16px; height: 15px; display: flex; align-items: center; justify-content: center; flex: none; }
.toolbar .lit { background: #fbe48c; border: 1px solid #d9b23c; }
.toolbar .spaced { margin: 0 4px; }
.toolbar .gap { margin-left: 2px; }
.toolbar .bar { margin: 0 3px; }
.toolbar select { height: 13px; }
.grip { width: 3px; height: 9px; border-left: 2px dotted #999; }
.s1 { width: 63px; margin: 0 2px; }
.s2 { width: 87px; margin-right: 2px; }
.s2:disabled { background-color: #ececee; color: #888; opacity: 1; border-color: #d9dadd; }
.s3 { width: 65px; }

main { flex: 1; display: flex; min-height: 0; }
aside { width: 241px; flex: none; display: flex; flex-direction: column; padding-right: 3px; border-right: 1px solid #cfd1d5; }
.ptitle { height: 16px; line-height: 13px; padding-left: 1px; color: #444; flex: none; }
.search { border: 1px solid #c9cbce; border-left: 0; height: 14px; padding: 0 1px; background: #fff; }
.pane { display: flex; background: #fff; overflow: hidden; }
.rows { flex: 1; min-width: 0; }
.rows li, .rows label { display: flex; align-items: center; gap: 2px; height: 12px; white-space: nowrap; }
.rows li:nth-child(even) { background: #f5f5f6; }
.tw { width: 8px; height: 8px; flex: none; }
.simpane { height: 345px; border-bottom: 1px solid #c9cbce; }
.simpane .l1 { padding-left: 9px; }
.simpane .l2 { padding-left: 18px; }
.simpane .l3 { padding-left: 27px; }
.simpane .l4 { padding-left: 37px; }
.simpane .leaf { padding-left: 38px; }
.simpane .item { padding-left: 19px; }
.rows input { appearance: none; width: 9px; height: 9px; border: 1px solid #333; background: #fff; margin: 0 2px 0 0; display: grid; place-items: center; }
.rows input:checked::before { content: ""; width: 3px; height: 6px; border: solid #2a9b3c; border-width: 0 1px 1px 0; transform: rotate(40deg); }
.vscroll { width: 12px; background: #d9dfe6; display: flex; flex-direction: column; align-items: center; padding: 4px 0; flex: none; }
.vscroll b { width: 10px; background: linear-gradient(#a9afb8, #a9afb8) no-repeat center / 5px 4px, #eef1f5; border: 1px solid #a8b0ba; }
.vscroll .dn { margin-top: auto; }
.long { height: 80px; margin-top: 3px; }
.short { height: 20px; margin-top: 3px; }
.mgr { display: flex; align-items: center; gap: 3px; padding-right: 2px; }
.mgr .ic { width: 9px; height: 9px; }
.mgr .ic:first-of-type { margin-left: auto; }
.manager { flex: 1; display: flex; padding-bottom: 4px; }
.side { width: 20px; display: flex; flex-direction: column; gap: 3px; }
.side button { height: 29px; display: flex; align-items: center; }
.side .cur { background: #fff; }
.side svg { width: 16px; height: 16px; }
.hist { flex: 1; min-width: 0; display: flex; flex-direction: column; border: 1px solid #cdcfd3; border-top: 0; }
.filter { display: flex; height: 17px; background: #fff; }
.filter select { width: 101px; padding: 0 1px; }
.filter input { flex: 1; min-width: 0; border: 1px solid #c3c5c9; border-left: 0; }
.filter button { width: 15px; display: flex; align-items: center; justify-content: center; }
.histpane { border-top: 1px solid #c9cbce; }
.rows .head { height: 15px; padding-left: 2px; }
.histpane .rows li:nth-child(odd) { background: #f5f5f6; }
.histpane .rows li:nth-child(even) { background: #fff; }
.histpane .l1 { padding-left: 9px; }
.histpane .chk { padding-left: 28px; }
.hscroll { height: 11px; display: flex; align-items: center; background: #d9dfe6; padding: 0 15px 0 5px; }
.hscroll b { width: 158px; height: 10px; margin: 0 auto 0 3px; background: linear-gradient(#a9afb8, #a9afb8) no-repeat center / 5px 4px, #f1f3f6; border: 1px solid #b6bcc4; }
.hist h3 { height: 16px; background: #fff; display: flex; align-items: center; gap: 4px; padding-left: 3px; font-weight: 600; margin-top: 1px; }
.replay { flex: 1; display: flex; flex-direction: column; align-items: center; justify-content: center; gap: 2px; }
.replay div { display: flex; gap: 3px; }
.replay button { width: 22px; height: 21px; border: 1px solid #d2d4d7; display: grid; place-items: center; background: #e7e8ea; }
.replay .play { background: #fff; }
.replay svg { width: 16px; height: 16px; fill: #a6a8ab; }
.replay .o { fill: none; stroke: #a6a8ab; stroke-width: 1.5px; }

.doc { flex: 1; min-width: 0; display: flex; flex-direction: column; }
.doctabs { display: flex; height: 14px; line-height: 14px; }
.doctabs a { background: #fff; width: 105px; text-align: right; padding-right: 9px; white-space: nowrap; }
.doctabs b { margin-left: 1px; font-family: "DejaVu Sans", sans-serif; font-weight: 400; }
.doctabs button { width: 16px; font-size: 12px; color: #777; }
.view { flex: 1; display: grid; grid-template-columns: 319fr 401fr 319fr; background: #fff; font: 10px/13px "Open Sans", "Noto Sans", sans-serif; color: #111; }
.view p { font-size: 10px; }
.info { display: flex; flex-direction: column; padding-left: 10px; min-width: 0; }
.view .hint { font-size: 6px; line-height: 8px; padding: 7px 0 0 3px; }
.ltitle { margin-top: 94px; }
.legend { display: flex; height: 280px; margin-top: 9px; line-height: 12px; }
.legend ol { display: flex; flex-direction: column; justify-content: space-between; font-size: 10px; }
.ramp { width: 6px; margin: 6px 0; background: repeating-linear-gradient(transparent 0 26px, rgba(255, 255, 255, .6) 26px 27px), linear-gradient(#d80000, #f0620a 10%, #f5c400 24%, #d8ee00 32%, #3fd400 44%, #00d020 52%, #00d890 66%, #00c8e8 76%, #0078f0 86%, #0000e0 95%, #0000a8); }
.factor { margin-top: 5px; }
.triad { width: 72px; height: 84px; margin: -3px 0 0 41px; flex: none; }
.scale { margin: auto 0 0 -8px; padding-bottom: 3px; }
.stage { display: flex; flex-direction: column; min-width: 0; padding-top: 2px; }
.viewbar { display: flex; align-items: center; height: 16px; font: 8px/10px "Open Sans", sans-serif; }
.viewbar button { width: 17px; height: 14px; display: flex; align-items: center; justify-content: center; gap: 2px; flex: none; }
.viewbar .w { width: 25px; }
.layer { display: flex; align-items: center; border: 1px solid #c6c8cc; height: 14px; padding-left: 2px; margin-left: -4px; flex: 1; min-width: 0; }
.layer select { border: 0; flex: 1; min-width: 0; height: 12px; padding: 0 2px; }
.model { width: 100%; flex: 1; min-height: 0; }
.meta { justify-self: end; padding: 25px 11px 0 0; white-space: nowrap; }
.sheets { display: flex; height: 16px; align-items: flex-start; line-height: 13px; border-bottom: 1px solid #c3c5c9; }
.sheets button { width: 10px; height: 13px; display: grid; place-items: center; }
.first { border-left: 1px solid #444; }
.last { border-right: 1px solid #444; }
.sheets a { padding: 0 7px; }
.sheets .on { background: #fff; }
```
